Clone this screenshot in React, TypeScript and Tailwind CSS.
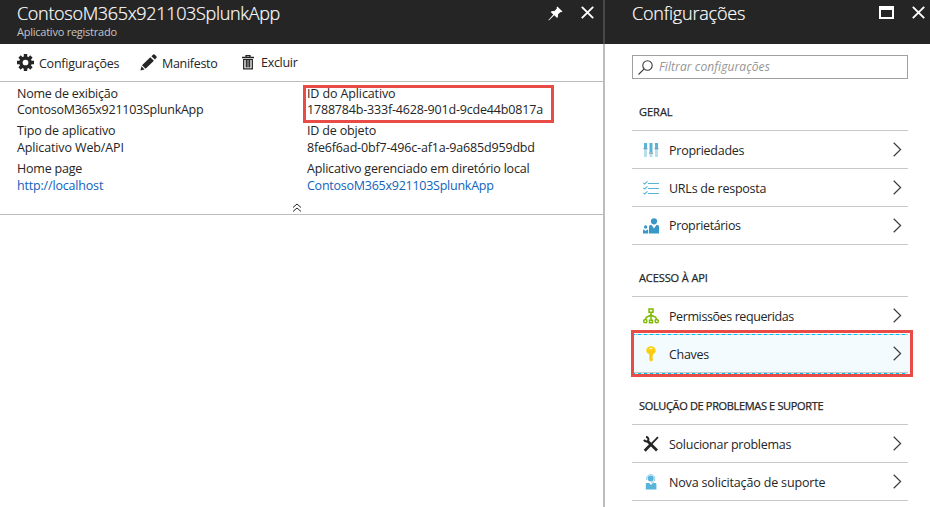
import type { ReactNode } from "react";

function Gear() {
  return (
    <svg width="17" height="17" viewBox="0 0 16 16" fill="none" stroke="#252525">
      <circle cx="8" cy="8" r="4.3" strokeWidth="3.2" />
      <g strokeWidth="3.2">
        <path d="M8 0v3M8 13v3M0 8h3M13 8h3" />
        <path d="M2.4 2.4l2 2M11.6 11.6l2 2M2.4 13.6l2-2M11.6 4.4l2-2" />
      </g>
    </svg>
  );
}

function Pencil() {
  return (
    <svg width="17" height="17" viewBox="0 0 17 17" fill="#252525">
      <path d="M10.3 3.2l3.6 3.6-8.3 8L2 11.3zM11.4 2.2l1.3-1.3c.8-.8 1.6-.8 2.4 0l1 1c.8.8.8 1.5 0 2.3l-1.2 1.4zM1.4 12.2l3.2 3.3L.5 16.5z" />
    </svg>
  );
}

function Trash() {
  return (
    <svg width="12" height="15" viewBox="0 0 12 15" fill="none" stroke="#252525">
      <path d="M0 2.5h12M4 2V.5h4V2" strokeWidth="1.3" />
      <path d="M1.7 4v9.8h8.6V4M4.3 4.5v8M6 4.5v8M7.7 4.5v8" strokeWidth="1.3" />
      <path d="M1 4.5h10" />
    </svg>
  );
}

function Pin() {
  return (
    <svg width="15" height="15" viewBox="0 0 15 15" fill="#fff">
      <path d="M9.3.4l5.2 5.1-1.4.7-.6-.2-2.6 2.6c.4 1.3.1 2.6-.8 3.5L6.3 9.300.8 14.400l-.4-.3 4.900-5.500-2.700-2.600c1-.9 2.300-1.100 3.600-.7L8.900 2.400 8.600 1.600z" />
    </svg>
  );
}

function Close() {
  return (
    <svg width="13" height="13" viewBox="0 0 13 13" stroke="#fff" strokeWidth="1.9">
      <path d="M.8.8l11.400 11.400M12.200.8L.8 12.200" />
    </svg>
  );
}

function Chevron() {
  return (
    <svg width="9" height="15" viewBox="0 0 9 15" fill="none" stroke="#3c3c3c" strokeWidth="1.2">
      <path d="M.7.700L7.600 7.500.7 14.300" />
    </svg>
  );
}

function Sliders() {
  return (
    <svg width="16" height="16" viewBox="0 0 16 16">
      <path fill="#b8dff0" d="M1 7h3v8H1zM6.500 11.500h3V15h-3zM12 7h3v8h-3z" />
      <path fill="#59b4d9" d="M1 1h3v5H1zM6.500 1h3v9.500h-3zM12 1h3v5h-3z" />
      <path fill="#7d9dab" d="M.5 6h4v1.200h-4zM6 10.500h4v1.200H6zM11.500 6h4v1.200h-4z" />
    </svg>
  );
}

function Checklist() {
  return (
    <svg width="16" height="14" viewBox="0 0 16 14" fill="none" stroke="#59b4d9">
      <path d="M5 2.500h11M5 7.500h11M5 12.500h11" strokeWidth="1.200" />
      <path d="M.3 1.800l1.400 1.200L4.500.4M.3 6.800L1.700 8l2.800-2.600M.3 11.800L1.700 13l2.800-2.600" strokeWidth="1.100" />
    </svg>
  );
}

function People() {
  return (
    <svg width="16" height="16" viewBox="0 0 16 16" fill="#3999c6">
      <circle cx="11" cy="3.300" r="3.100" />
      <path d="M6 15.500V8.500Q6 7 7.500 7H8.600L11 10.500 13.400 7H14.500Q16 7 16 8.500v7z" />
      <circle cx="2.600" cy="9" r="1.700" />
      <path d="M0 15.500V12.500q0-1 1-1l1.600 1.600 1.600-1.600q1 0 1 1v3z" />
    </svg>
  );
}

function Network() {
  return (
    <svg width="16" height="16" viewBox="0 0 16 16" fill="none" stroke="#7fba00" strokeWidth="1.500">
      <path d="M6 1h4v3.200H6zM8 4.200V12M8 7L3.300 9.200 2.500 11.500M8 7l4.700 2.200.800 2.300" />
      <circle cx="2.300" cy="13.200" r="1.600" />
      <circle cx="13.700" cy="13.200" r="1.600" />
      <path d="M6.500 12.200h3v2.600h-3z" />
    </svg>
  );
}

function Key() {
  return (
    <svg width="10" height="16" viewBox="0 0 10 16">
      <path fill="#fcd116" d="M5 .3c2.700 0 4.800 1.700 4.800 4.200C9.800 6.300 8.700 7.500 7 8.200V10l-.8.8.8.800-.8.900.8.800v1L5 15.700 3.300 14V8.200C1.400 7.500.2 6.300.2 4.500.2 2 2.300.300 5 .300z" />
      <path stroke="#fff" d="M3.700 2.500h2.600" />
      <path stroke="#f3bd12" strokeWidth=".7" d="M1.500 5.700h7M4.700 7.500v7" />
    </svg>
  );
}

function Tools() {
  return (
    <svg width="16" height="16" viewBox="0 0 16 16" fill="none" stroke="#252525">
      <path d="M4 4.500l10 10" strokeWidth="2.800" />
      <path d="M3 .9c2.100.3 2.800 1.900 2.200 3.400C4.500 5.800 2.400 5.900.9 3.900" strokeWidth="2" />
      <path d="M15 1.100L8.500 7.800" strokeWidth="1.800" />
      <path d="M8 8.300L1.700 14.700" strokeWidth="2.800" />
    </svg>
  );
}

function Support() {
  return (
    <svg width="12" height="16" viewBox="0 0 12 16">
      <circle cx="5.700" cy="4.600" r="3" fill="#59b4d9" />
      <path d="M1.700 6V4.300C1.700 2.200 3.400.700 5.700.700s4 1.500 4 3.600V6c0 1.600-1.500 2.300-3.700 2.300" fill="none" stroke="#8dcbe5" />
      <path d="M1.700 9h2.500L6 11l1.800-2h2.600q1 0 1 1V15.500H.8V10q0-1 .9-1z" fill="#59b4d9" />
    </svg>
  );
}

interface FieldProps {
  label: string;
  value: string;
  link?: boolean;
  labelClass: string;
  valueClass: string;
}

function Field({ label, value, link, labelClass, valueClass }: FieldProps) {
  return (
    <div className="mb-[4px]">
      <div className={labelClass}>{label}</div>
      <div className={`${valueClass} ${link ? "text-[#1062bd]" : ""}`}>{value}</div>
    </div>
  );
}

function Row({ icon, label, track, selected }: { icon: ReactNode; label: string; track: string; selected?: boolean }) {
  return (
    <div className={`relative flex h-[38px] items-center border-b border-[#c8c8c8] ${selected ? "bg-[#f3fbfe]" : ""}`}>
      {selected && (
        <>
          <div className="absolute inset-x-0 top-[-1px] h-px bg-[repeating-linear-gradient(90deg,#00bcf2_0_3px,#c8c8c8_3px_6px)]" />
          <div className="absolute inset-x-0 bottom-[-2px] h-px bg-[repeating-linear-gradient(90deg,#00bcf2_0_3px,#e0eef3_3px_6px)]" />
          <div className="absolute inset-y-0 -right-[2px] w-[2px] bg-[#f3fbfe]" />
          <div className="absolute -top-[5px] -left-[1px] h-[47px] w-[282px] border-[3px] border-[#e94b47]" />
        </>
      )}
      <span className="ml-[11px] flex w-4 justify-center">{icon}</span>
      <span className={`ml-[10px] whitespace-nowrap ${track}`}>{label}</span>
      <span className="mr-[6px] ml-auto">
        <Chevron />
      </span>
    </div>
  );
}

function SectionTitle({ children, track }: { children: ReactNode; track: string }) {
  return (
    <div className={`flex h-[51px] items-center border-b border-[#c8c8c8] pt-[15px] pb-[2px] pl-[7px] text-[11px] whitespace-nowrap [-webkit-text-stroke:0.25px_#252525] ${track}`}>
      {children}
    </div>
  );
}

export default function App() {
  return (
    <div className="flex h-[507px] w-[930px] overflow-hidden bg-white font-['Open_Sans','Noto_Sans',sans-serif] text-[12.5px] leading-[17px] text-[#252525]">
      <main className="w-[603px] shrink-0">
        <header className="flex h-[44px] justify-between bg-[#252525] pl-[17px]">
          <div className="whitespace-nowrap">
            <h1 className="h-[26px] text-[18px] leading-[27px] font-light tracking-[-0.32px] text-white [-webkit-text-stroke:0.2px_#fff]">ContosoM365x921103SplunkApp</h1>
            <p className="text-[11px] leading-[12px] tracking-[-0.24px] text-[#c4c4c4]">Aplicativo registrado</p>
          </div>
          <div className="flex items-start gap-[18px] pt-[6px] pr-[9px]">
            <Pin />
            <Close />
          </div>
        </header>
        <div className="flex h-[38px] items-center border-b border-[#bdbdbd] pl-[17px] whitespace-nowrap">
          <Gear />
          <span className="ml-[5px] w-[101px] pt-[2px] tracking-[-0.25px]">Configurações</span>
          <Pencil />
          <span className="ml-[5px] w-[80px] pt-[2px] tracking-[-0.3px]">Manifesto</span>
          <Trash />
          <span className="ml-[7px] tracking-[-0.3px]">Excluir</span>
        </div>
        <section className="relative flex h-[133px] border-b border-[#bdbdbd] pt-[3px] pl-[17px] whitespace-nowrap">
          <div className="w-[290px]">
            <Field label="Nome de exibição" value="ContosoM365x921103SplunkApp" labelClass="h-[16px] tracking-[-0.25px]" valueClass="h-[17px] tracking-[-0.26px]" />
            <Field label="Tipo de aplicativo" value="Aplicativo Web/API" labelClass="h-[17px] tracking-[-0.18px]" valueClass="h-[17px] tracking-[-0.13px]" />
            <Field label="Home page" value="http://localhost" link labelClass="h-[17px] tracking-[-0.2px]" valueClass="h-[17px] tracking-[-0.18px]" />
          </div>
          <div>
            <Field label="ID do Aplicativo" value="1788784b-333f-4628-901d-9cde44b0817a" labelClass="h-[16px] tracking-[-0.12px]" valueClass="h-[17px] tracking-[-0.18px]" />
            <Field label="ID de objeto" value="8fe6f6ad-0bf7-496c-af1a-9a685d959dbd" labelClass="h-[17px] tracking-[-0.16px]" valueClass="h-[17px] tracking-[-0.17px]" />
            <Field label="Aplicativo gerenciado em diretório local" value="ContosoM365x921103SplunkApp" link labelClass="h-[17px] tracking-[-0.19px]" valueClass="h-[17px] tracking-[-0.25px]" />
          </div>
          <div className="absolute top-[3px] left-[303px] h-[38px] w-[251px] border-[3px] border-[#e94b47]" />
          <svg className="absolute top-[121px] left-[292px]" width="10" height="9" viewBox="0 0 10 9" fill="none" stroke="#252525">
            <path d="M1 4.500l4-3.500 4 3.500M1 8.500L5 5l4 3.500" />
          </svg>
        </section>
      </main>
      <div className="w-[2px] shrink-0 bg-[#bdbdbd]">
        <div className="h-[44px] bg-[#484848]" />
      </div>
      <aside className="w-[325px] shrink-0">
        <header className="flex h-[44px] items-start bg-[#252525] pl-[27px]">
          <h2 className="text-[18px] leading-[27px] font-light tracking-[-0.2px] text-white [-webkit-text-stroke:0.2px_#fff]">Configurações</h2>
          <div className="mt-[6px] mr-[18px] ml-auto h-[13px] w-[15px] border-2 border-t-[4px] border-white" />
          <span className="mt-[6px] mr-[5px]">
            <Close />
          </span>
        </header>
        <div className="mt-[11px] ml-[27px] w-[276px]">
          <div className="flex h-[24px] items-center border border-[#a0a0a0] pl-[5px]">
            <svg width="15" height="15" viewBox="0 0 15 15" fill="none" stroke="#3c3c3c" strokeWidth="1.100">
              <circle cx="9.500" cy="5.500" r="4.700" />
              <path d="M6.200 8.900L.5 14.500" />
            </svg>
            <span className="ml-[6px] pb-[2px] text-[12px] leading-[15px] tracking-[0.09px] text-[#959595] italic">Filtrar configurações</span>
          </div>
          <div className="mt-px">
            <SectionTitle track="tracking-[0px]">GERAL</SectionTitle>
            <Row icon={<Sliders />} label="Propriedades" track="pt-[2px] tracking-[-0.25px]" />
            <Row icon={<Checklist />} label="URLs de resposta" track="pt-[2px] tracking-[-0.24px]" />
            <Row icon={<People />} label="Proprietários" track="tracking-[-0.35px]" />
          </div>
          <div className="mt-px">
            <SectionTitle track="tracking-[-0.1px]">ACESSO À API</SectionTitle>
            <Row icon={<Network />} label="Permissões requeridas" track="pt-[2px] tracking-[-0.4px]" />
            <Row icon={<Key />} label="Chaves" track="pt-[2px] tracking-[-0.3px]" selected />
          </div>
          <div className="mt-px">
            <SectionTitle track="tracking-[-0.34px]">SOLUÇÃO DE PROBLEMAS E SUPORTE</SectionTitle>
            <Row icon={<Tools />} label="Solucionar problemas" track="pt-[2px] tracking-[-0.26px]" />
            <Row icon={<Support />} label="Nova solicitação de suporte" track="pt-[2px] tracking-[-0.16px]" />
          </div>
        </div>
      </aside>
    </div>
  );
}
